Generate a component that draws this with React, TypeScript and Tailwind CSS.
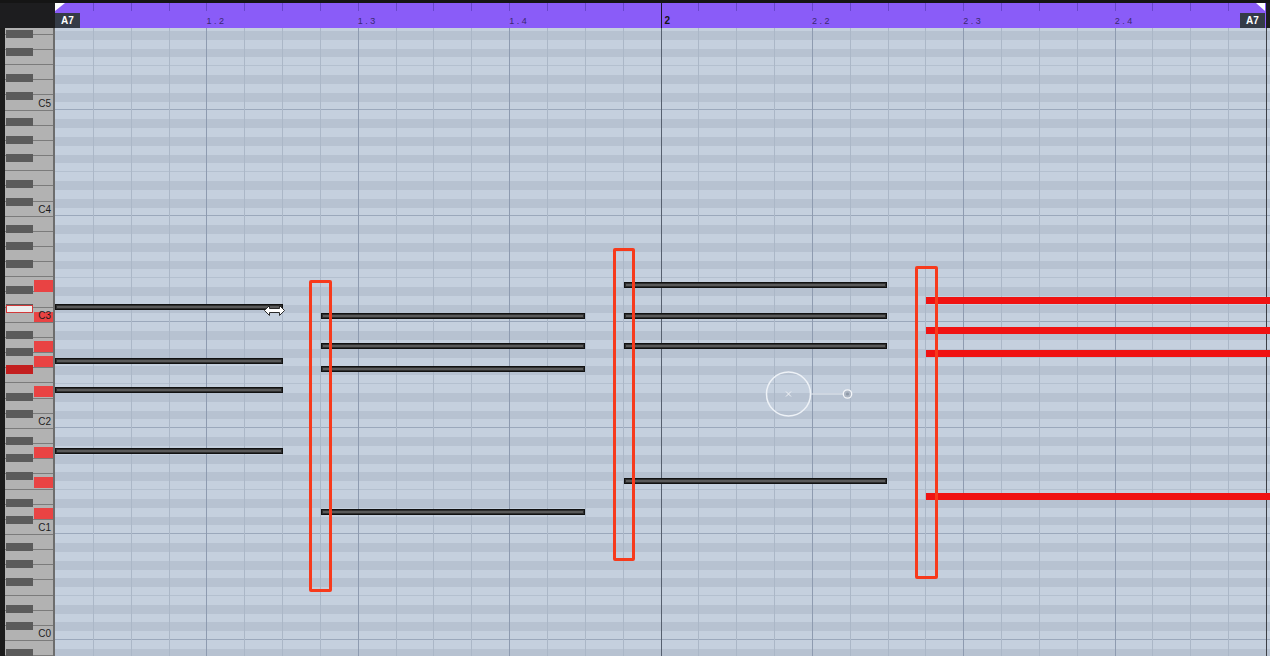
import React from 'react';

const COLS = Array.from({ length: 32 }, (_, k) => k);
const OCTAVES = [5, 4, 3, 2, 1, 0, -1];
const WHITE_NAMES = ['B', 'A', 'G', 'F', 'E', 'D', 'C'];
const ROWS = [
  { n: 'B', cls: 'h-[8.842px] bg-[#c5d0de]' },
  { n: 'A#', cls: 'h-[8.842px] bg-[#b7c2d1]' },
  { n: 'A', cls: 'h-[8.842px] bg-[#c5d0de]' },
  { n: 'G#', cls: 'h-[8.842px] bg-[#b7c2d1]' },
  { n: 'G', cls: 'h-[8.842px] bg-[#c5d0de]' },
  { n: 'F#', cls: 'h-[8.842px] bg-[#b7c2d1]' },
  { n: 'F', cls: 'h-[8.842px] bg-[#c5d0de] border-b border-[#b4c0cf]' },
  { n: 'E', cls: 'h-[8.842px] bg-[#c5d0de]' },
  { n: 'D#', cls: 'h-[8.842px] bg-[#b7c2d1]' },
  { n: 'D', cls: 'h-[8.842px] bg-[#c5d0de]' },
  { n: 'C#', cls: 'h-[8.842px] bg-[#b7c2d1]' },
  { n: 'C', cls: 'h-[8.842px] bg-[#c5d0de] border-b border-[#9ba8bb]' },
];

const rulerLabels: Record<number, string> = {
  4: '1 . 2',
  8: '1 . 3',
  12: '1 . 4',
  20: '2 . 2',
  24: '2 . 3',
  28: '2 . 4',
};

function gridLineClass(k: number) {
  if (k === 0) return 'w-[37.85px] shrink-0';
  if (k === 16) return 'w-[37.85px] shrink-0 border-l-[1.5px] border-[#56606f]';
  if (k % 4 === 0) return 'w-[37.85px] shrink-0 border-l border-[#8e9bb0]';
  return 'w-[37.85px] shrink-0 border-l border-[#abb7c7]';
}

function KeyOctave({ oct }: { oct: number }) {
  return (
    <div className="relative h-[106.1px]">
      {WHITE_NAMES.map((n) => (
        <div
          key={n}
          className="flex h-[15.157px] items-end justify-end border-b border-[#7b7b7b] pr-[2px] pb-[1px]"
        >
          {n === 'C' && oct >= 0 && (
            <span className="relative z-10 text-[10px] leading-[10px] text-[#1c1c1c]">C{oct}</span>
          )}
        </div>
      ))}
      <div className="absolute left-[1px] top-[7.84px] h-[8px] w-[27px] bg-[#5b5b5b]" />
      <div className="absolute left-[1px] top-[25.53px] h-[8px] w-[27px] bg-[#5b5b5b]" />
      <div className="absolute left-[1px] top-[43.21px] h-[8px] w-[27px] bg-[#5b5b5b]" />
      <div className="absolute left-[1px] top-[69.74px] h-[8px] w-[27px] bg-[#5b5b5b]" />
      <div className="absolute left-[1px] top-[87.42px] h-[8px] w-[27px] bg-[#5b5b5b]" />
    </div>
  );
}

function GridOctave() {
  return (
    <div className="flex flex-col">
      {ROWS.map((r) => (
        <div key={r.n} className={r.cls} />
      ))}
    </div>
  );
}

const keyHighlights: [number, number][] = [
  [252, 12],
  [283.7, 10],
  [312.7, 11],
  [327.7, 11.3],
  [357.7, 11.6],
  [419, 11],
  [448.5, 11],
  [479.5, 11],
];

type Note = { x: number; y: number; w: number };
const darkNotes: Note[] = [
  { x: 55, y: 304, w: 228 },
  { x: 55, y: 357.5, w: 228 },
  { x: 55, y: 386.8, w: 228 },
  { x: 55, y: 448, w: 228 },
  { x: 321, y: 312.5, w: 264 },
  { x: 321, y: 342.5, w: 264 },
  { x: 321, y: 365.5, w: 264 },
  { x: 321, y: 509, w: 264 },
  { x: 624, y: 282.3, w: 263 },
  { x: 624, y: 312.5, w: 263 },
  { x: 624, y: 342.5, w: 263 },
  { x: 624, y: 478, w: 263 },
];
const redNotes: Note[] = [
  { x: 926, y: 297, w: 360 },
  { x: 926, y: 326.7, w: 360 },
  { x: 926, y: 350, w: 360 },
  { x: 926, y: 493, w: 360 },
];
const boxes = [
  { x: 308.5, y: 280, w: 23, h: 312 },
  { x: 612.5, y: 247.5, w: 22.5, h: 313 },
  { x: 914.5, y: 266, w: 23, h: 313 },
];

export default function App() {
  return (
    <div className="relative h-[656px] w-[1270px] overflow-hidden bg-[#1d1d1f] font-['Liberation_Sans',Arial,sans-serif]">
      {/* Ruler */}
      <div className="flex flex-col">
        <div className="h-[3px] bg-[#151515]" />
        <div className="flex h-[25px]">
          <div className="w-[55px] shrink-0 bg-[#1d1d1f]" />
          <div className="relative flex w-[1211px] shrink-0 bg-[#8a5cf8]">
            {COLS.map((k) =>
              k === 16 ? (
                <div key={k} className="flex w-[37.85px] shrink-0 flex-col border-l-[1.5px] border-[#1c1828]">
                  <span className="ml-[3px] mt-[12px] text-[10px] font-bold leading-[11px] text-[#141414]">2</span>
                </div>
              ) : (
                <div key={k} className="flex w-[37.85px] shrink-0 flex-col">
                  <div className={k === 0 ? 'h-[8px] w-px' : 'h-[8px] w-px bg-[#6846cc]'} />
                  {rulerLabels[k] && (
                    <span className="mt-[5px] whitespace-nowrap text-[9px] leading-[11px] text-[#3a2870]">
                      {rulerLabels[k]}
                    </span>
                  )}
                </div>
              )
            )}
            <svg className="absolute left-0 top-0" width="10" height="8" viewBox="0 0 10 8">
              <polygon points="0,0 10,0 0,8" fill="#ffffff" />
            </svg>
            <div className="absolute bottom-0 left-0 flex h-[15px] w-[25px] items-center justify-center bg-[#343b47] text-[10px] font-bold text-white">
              A7
            </div>
            <svg className="absolute right-[1px] top-0" width="9" height="8" viewBox="0 0 9 8">
              <polygon points="0,0 9,0 9,8" fill="#ffffff" />
            </svg>
            <div className="absolute bottom-0 right-[1px] flex h-[15px] w-[25px] items-center justify-center bg-[#343b47] text-[10px] font-bold text-white">
              A7
            </div>
          </div>
          <div className="flex-1 bg-[#1d1d1f]" />
        </div>
      </div>

      {/* Body */}
      <div className="flex h-[628px] overflow-hidden">
        <div className="w-[5px] shrink-0 bg-[#1b1b1b]" />
        <div className="relative w-[48px] shrink-0 overflow-hidden bg-[#b2b2b2]">
          <div className="mt-[-23.5px]">
            {OCTAVES.map((o) => (
              <KeyOctave key={o} oct={o} />
            ))}
          </div>
          {keyHighlights.map(([t, h], i) => (
            <div
              key={i}
              className="absolute left-[29px] w-[19px] bg-[#e94343]"
              style={{ top: t, height: h }}
            />
          ))}
          <div className="absolute left-[1px] top-[277px] h-[8px] w-[27px] border border-[#d23a3a] bg-[#eeeeee]" />
          <div className="absolute left-[1px] top-[337px] h-[8.5px] w-[27px] bg-[#c31f1f]" />
        </div>
        <div className="w-[2px] shrink-0 bg-[#6d6d6d]" />
        <div className="relative flex-1 overflow-hidden bg-[#c5d0de]">
          <div className="mt-[-23.5px]">
            {OCTAVES.map((o) => (
              <GridOctave key={o} />
            ))}
          </div>
          <div className="pointer-events-none absolute inset-0 flex">
            {COLS.map((k) => (
              <div key={k} className={gridLineClass(k)} />
            ))}
            <div className="flex-1 border-l border-[#3c3f45]" />
          </div>
        </div>
      </div>

      {/* Canvas overlay: notes, selections, cursor */}
      <div className="pointer-events-none absolute inset-0">
        {darkNotes.map((n, i) => (
          <div
            key={i}
            className="absolute h-[6px] border border-[#111111] bg-[#5a5a5a] shadow-[inset_0_0_0_1px_#2e2e2e]"
            style={{ left: n.x, top: n.y, width: n.w }}
          />
        ))}
        {redNotes.map((n, i) => (
          <div
            key={i}
            className="absolute h-[7px] bg-[#f01212]"
            style={{ left: n.x, top: n.y, width: n.w }}
          />
        ))}
        {boxes.map((b, i) => (
          <div
            key={i}
            className="absolute rounded-[2px] border-[3px] border-[#f73a1c]"
            style={{ left: b.x, top: b.y, width: b.w, height: b.h }}
          />
        ))}
        <svg className="absolute left-[263px] top-[304px]" width="23" height="13" viewBox="0 0 23 13">
          <path
            d="M1.5 6.5 L6.5 1.5 L6.5 4.5 L16.5 4.5 L16.5 1.5 L21.5 6.5 L16.5 11.5 L16.5 8.5 L6.5 8.5 L6.5 11.5 Z"
            fill="#ffffff"
            stroke="#2a2a2a"
            strokeWidth="1"
            strokeLinejoin="round"
          />
        </svg>
        <svg className="absolute left-[760px] top-[366px]" width="100" height="56" viewBox="0 0 100 56">
          <circle cx="28.5" cy="28" r="22" fill="none" stroke="#eef2f7" strokeWidth="1.5" />
          <line x1="26" y1="25.5" x2="31" y2="30.5" stroke="#f2f4f7" strokeWidth="1" />
          <line x1="31" y1="25.5" x2="26" y2="30.5" stroke="#f2f4f7" strokeWidth="1" />
          <line x1="50.5" y1="28" x2="83.3" y2="28" stroke="#e6ebf1" strokeWidth="1" />
          <circle cx="87.5" cy="28" r="4.2" fill="#aeb7c4" stroke="#f4f6f9" strokeWidth="1.3" />
          <circle cx="87.5" cy="28" r="1.6" fill="#8f99a7" />
        </svg>
      </div>
    </div>
  );
}
